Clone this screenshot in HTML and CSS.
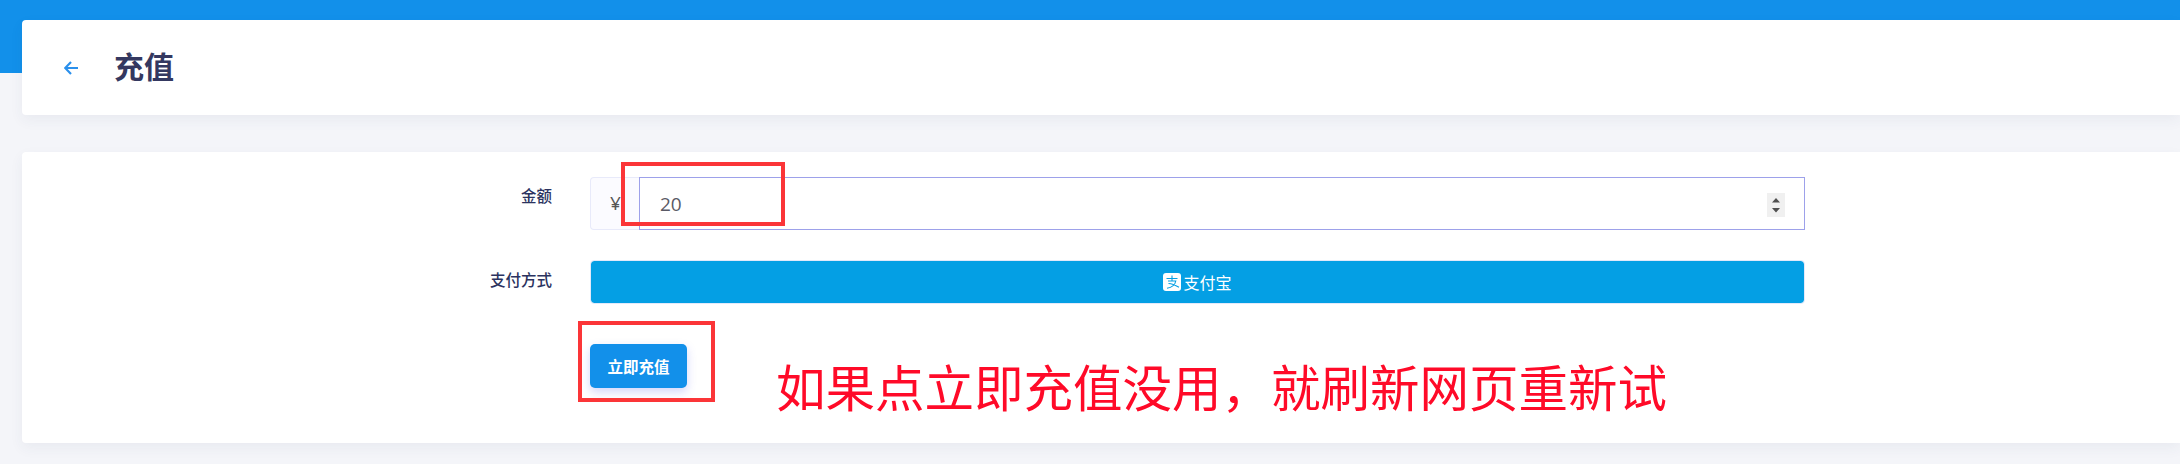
FILE: index.html
```html
<!DOCTYPE html>
<html lang="zh">
<head>
<meta charset="utf-8">
<title>充值</title>
<link rel="stylesheet" href="styles.css">
</head>
<body>
<div class="page">
  <header class="card head">
    <a class="back" href="#" aria-label="返回">
      <svg width="14" height="14" viewBox="0 0 14 14"><path d="M7 1 1.200 7 7 13M1.500 7H14" fill="none" stroke="#2b90ec" stroke-width="2.200"/></svg>
    </a>
    <h1 class="title">充值</h1>
  </header>
  <main class="card form">
    <div class="row row-amount">
      <label class="label">金额</label>
      <div class="group">
        <span class="prefix">¥</span>
        <div class="field">
          <input class="amount" type="text" value="20">
          <span class="spin">
            <svg width="18" height="24" viewBox="0 0 18 24"><path d="M5 9.500 9 5l4 4.500zM5 15h8l-4 4.500z" fill="#505050"/></svg>
          </span>
        </div>
      </div>
    </div>
    <div class="row row-pay">
      <label class="label">支付方式</label>
      <button class="pay" type="button">
        <svg class="ali" width="18" height="18" viewBox="0 0 18 18"><rect width="18" height="18" rx="3" fill="#fff"/><path d="M3.500 5.500h11M9 2.500v5M5 8h7.800c-.8 3.800-3.500 6.500-8.800 7.200M5.500 10.500c3 .2 7 1.800 10.500 3.800" fill="none" stroke="#049fe4" stroke-width="1.100"/></svg>
        <span>支付宝</span>
      </button>
    </div>
    <div class="row row-submit">
      <button class="submit" type="button">立即充值</button>
    </div>
  </main>
  <div class="mark mark-input"></div>
  <div class="mark mark-button"></div>
  <div class="note">如果点立即充值没用，就刷新网页重新试</div>
</div>
</body>
</html>
```

FILE: styles.css
```css
html, body { margin: 0; padding: 0; }
body {
  width: 2180px;
  height: 464px;
  overflow: hidden;
  font-family: "Noto Sans CJK SC", "Noto Sans", sans-serif;
  background: #f4f5f9;
}
.page {
  position: relative;
  height: 464px;
  padding: 20px 0 0 22px;
  box-sizing: border-box;
  background: linear-gradient(#1290ea 73px, #f4f5f9 73px);
}
.card {
  background: #fff;
  border-radius: 4px 0 0 4px;
  box-shadow: 0 5px 14px rgba(50, 60, 110, .06);
}
.head {
  height: 95px;
  display: flex;
  align-items: center;
  padding-left: 42px;
}
.back { display: flex; margin-right: 36px; }
.title {
  margin: 0 0 6px;
  font-size: 30px;
  font-weight: 700;
  color: #343860;
  line-height: 1;
}
.form {
  margin-top: 37px;
  height: 291px;
  padding-top: 25px;
  box-sizing: border-box;
}
.row { display: flex; align-items: flex-start; }
.label {
  width: 530px;
  text-align: right;
  font-size: 15.500px;
  font-weight: 500;
  line-height: 22px;
  color: #2b3360;
  margin-right: 38px;
}
.row-amount .label { margin-top: 7px; }
.group { display: flex; width: 1215px; height: 53px; }
.prefix {
  width: 49px;
  flex: none;
  box-sizing: border-box;
  padding: 6px 0 0 19px;
  border: 1px solid #e8eafa;
  border-right: 0;
  border-radius: 4px 0 0 4px;
  background: #fbfbff;
  font-family: "Open Sans", sans-serif;
  font-size: 19px;
  line-height: 38px;
  color: #555;
}
.field {
  flex: 1;
  min-width: 0;
  display: flex;
  align-items: center;
  box-sizing: border-box;
  border: 1px solid #9da1ea;
  padding: 0 19px 0 20px;
  background: #fff;
}
.amount {
  flex: 1;
  min-width: 0;
  border: 0;
  outline: 0;
  padding: 0;
  background: transparent;
  font-family: "Open Sans", sans-serif;
  font-size: 19px;
  color: #5a5a66;
}
.spin {
  display: flex;
  flex: none;
  background: #f0f0f0;
  margin-top: 2px;
}
.row-pay { margin-top: 30px; }
.row-pay .label { margin-top: 8px; }
.pay {
  width: 1215px;
  height: 44px;
  box-sizing: border-box;
  border: 1px solid #e2e9fa;
  border-radius: 4px;
  background: #049fe4;
  background-clip: padding-box;
  color: #fff;
  font-family: inherit;
  font-size: 16px;
  display: flex;
  align-items: center;
  justify-content: center;
  gap: 2px;
  padding: 0;
}
.ali { flex: none; }
.row-submit { margin-top: 40px; padding-left: 568px; }
.submit {
  width: 97px;
  height: 44px;
  border: 0;
  border-radius: 5px;
  background: #1290ea;
  color: #fff;
  font-family: inherit;
  font-size: 15.500px;
  font-weight: 700;
  padding: 0;
  box-shadow: 0 4px 10px rgba(80, 90, 240, .25);
}
.mark {
  position: absolute;
  box-sizing: border-box;
  border: 4px solid #fb3538;
}
.mark-input { left: 621px; top: 162px; width: 164px; height: 64px; }
.mark-button { left: 578px; top: 321px; width: 137px; height: 81px; }
.note {
  position: absolute;
  left: 776px;
  top: 353px;
  font-size: 49.500px;
  font-weight: 400;
  line-height: 66px;
  color: #ff0a28;
  white-space: nowrap;
}
```
